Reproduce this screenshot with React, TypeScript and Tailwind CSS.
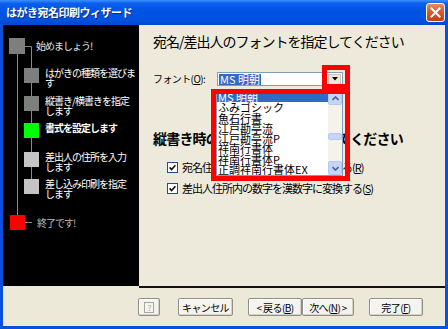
import React from 'react';

const fonts = [
  'MS 明朝',
  'ふみゴシック',
  '魚石行書',
  '江戸勘亭流',
  '江戸勘亭流P',
  '祥南行書体',
  '祥南行書体P',
  '正調祥南行書体EX',
];

function SubStep({ mt, color, bold, lines }: { mt: string; color: string; bold?: boolean; lines: string[] }) {
  return (
    <div className={`flex items-start ml-[21px] ${mt}`}>
      <span className={`w-[15px] h-[15px] shrink-0 ${color}`} />
      <span className={`ml-[6px] leading-[10px] whitespace-nowrap ${bold ? 'font-bold' : ''}`}>
        {lines.map((l) => (
          <span key={l} className="block">
            {l}
          </span>
        ))}
      </span>
    </div>
  );
}

function StepPanel() {
  return (
    <div className="relative w-[136px] h-full shrink-0 bg-black text-white text-[10px] tracking-[-1px]">
      <svg className="absolute inset-0" width="136" height="261">
        <g stroke="#8a8a8a" strokeWidth="1" fill="none">
          <path d="M14.5 29 V190" />
          <path d="M22 21.5 H28.5 V162" />
          <path d="M22 197.5 H29" />
        </g>
      </svg>
      <div className="relative flex flex-col pt-[13px]">
        <div className="flex items-center h-[16px] ml-[6px]">
          <span className="w-[16px] h-[16px] bg-[#7d7f7d]" />
          <span className="ml-[11px] leading-[16px] text-[#e4e4e4]">始めましょう!</span>
        </div>
        <SubStep mt="mt-[14px]" color="bg-[#7d7f7d]" lines={['はがきの種類を選びま', 'す']} />
        <SubStep mt="mt-[8px]" color="bg-[#7d7f7d]" lines={['縦書き/横書きを指定', 'します']} />
        <SubStep mt="mt-[7px]" color="bg-[#00ff00]" bold lines={['書式を設定します']} />
        <SubStep mt="mt-[14px]" color="bg-[#c4c4c4]" lines={['差出人の住所を入力', 'します']} />
        <SubStep mt="mt-[7px]" color="bg-[#c4c4c4]" lines={['差し込み印刷を指定', 'します']} />
        <div className="flex items-center ml-[7px] mt-[16px]">
          <span className="w-[15px] h-[15px] bg-[#ff0000]" />
          <span className="ml-[12px] leading-[15px] text-[#b8b8b8]">終了です!</span>
        </div>
      </div>
    </div>
  );
}

function Check({ label, k }: { label: string; k: string }) {
  return (
    <div className="flex items-center h-[11px] ml-[14px]">
      <span className="w-[11px] h-[11px] border border-[#1c5180] bg-white flex items-center justify-center">
        <svg width="7" height="7" viewBox="0 0 7 7">
          <path d="M0.6 3.4 L2.6 5.5 L6.4 1.2" stroke="#111" strokeWidth="1.6" fill="none" />
        </svg>
      </span>
      <span className="ml-[4px] text-[11px] leading-[11px] tracking-[-1px] whitespace-nowrap">
        {label}(<span className="underline">{k}</span>)
      </span>
    </div>
  );
}

function Btn({ w, children, ml }: { w: string; children: React.ReactNode; ml: string }) {
  return (
    <div
      className={`${w} ${ml} h-[18px] flex items-center justify-center rounded-[2px] border border-[#8f8f88] bg-[#f4f3ee] shadow-[inset_-1px_-1px_0_#d6d3c6,inset_1px_1px_0_#ffffff] text-[10px] tracking-[-0.6px] whitespace-nowrap`}
    >
      {children}
    </div>
  );
}

export default function App() {
  return (
    <div className="w-[448px] h-[329px] flex flex-col overflow-hidden font-['Noto_Sans_CJK_JP',sans-serif] text-black">
      <div className="h-[25px] shrink-0 flex items-center justify-between pl-[6px] pr-[3px] bg-[linear-gradient(180deg,#3c8ffb_0%,#0a5fee_14%,#0054e3_45%,#0052e2_80%,#0045cf_100%)]">
        <span className="text-white text-[11px] font-bold tracking-[-0.5px] leading-none [text-shadow:1px_1px_0_#0a2a7a]">
          はがき宛名印刷ウィザード
        </span>
        <div className="w-[19px] h-[19px] rounded-[3px] border border-white bg-[linear-gradient(180deg,#e98a68_0%,#d95a33_45%,#c43d16_100%)] flex items-center justify-center">
          <svg width="11" height="11" viewBox="0 0 11 11">
            <path d="M1.5 1.5 L9.5 9.5 M9.5 1.5 L1.5 9.5" stroke="#fff" strokeWidth="2" strokeLinecap="square" />
          </svg>
        </div>
      </div>

      <div className="flex-1 flex flex-col border-x-[3px] border-b-[3px] border-[#0a4fdd] bg-[#ece9d8]">
        <div className="flex h-[261px]">
          <StepPanel />
          <div className="relative flex-1 pl-[14px] pt-[9px] bg-[#edeadc]">
            <h1 className="text-[14px] leading-[14px] tracking-[-1px] whitespace-nowrap">
              宛名/差出人のフォントを指定してください
            </h1>

            <div className="flex items-center h-[14px] mt-[24px]">
              <span className="w-[64px] text-[10px] tracking-[-0.6px] leading-[14px]">
                フォント(<span className="underline">O</span>):
              </span>
              <div className="w-[126px] h-[14px] border border-[#7f9db9] bg-white flex items-center pl-[1px] pr-[1px]">
                <span className="bg-[#316ac5] text-white text-[11px] leading-[11px] px-[1px]">MS 明朝</span>
                <span className="flex-1" />
                <span className="w-[13px] h-[11px] bg-[#ece9d8] border border-[#c9c6b8] flex items-center justify-center">
                  <svg width="6" height="4" viewBox="0 0 6 4">
                    <path d="M0 0 H6 L3 3.5 Z" fill="#000" />
                  </svg>
                </span>
              </div>
            </div>

            <h2 className="mt-[45px] text-[14px] leading-[14px] font-bold tracking-[-0.8px] whitespace-nowrap">
              縦書き時の数字の表記を指定してください
            </h2>

            <div className="mt-[17px]">
              <Check label="宛名住所内の数字を漢数字に変換する" k="R" />
            </div>
            <div className="mt-[10px]">
              <Check label="差出人住所内の数字を漢数字に変換する" k="S" />
            </div>

            {/* open dropdown list */}
            <div className="absolute left-[77px] top-[65px] w-[127px] h-[86px] border border-[#7f9db9] bg-white flex">
              <div className="flex-1 pt-[1px] text-[11px] leading-[10.3px] whitespace-nowrap overflow-hidden">
                {fonts.map((f, i) => (
                  <div key={f} className={i === 0 ? 'bg-[#316ac5] text-white pl-[1px]' : 'pl-[1px]'}>
                    {f}
                  </div>
                ))}
              </div>
              <div className="w-[14px] flex flex-col bg-[#f4f2ea]">
                <div className="h-[14px] rounded-[2px] bg-[#c6d5fa] border border-[#b4c8f5] flex items-center justify-center">
                  <svg width="7" height="5" viewBox="0 0 7 5">
                    <path d="M0.5 4 L3.5 1 L6.5 4" stroke="#4d6185" strokeWidth="1.6" fill="none" />
                  </svg>
                </div>
                <div className="mt-[28px] h-[7px] rounded-[2px] bg-[#c6d5fa] border border-[#b4c8f5]" />
                <div className="flex-1" />
                <div className="h-[14px] rounded-[2px] bg-[#c6d5fa] border border-[#b4c8f5] flex items-center justify-center">
                  <svg width="7" height="5" viewBox="0 0 7 5">
                    <path d="M0.5 1 L3.5 4 L6.5 1" stroke="#4d6185" strokeWidth="1.6" fill="none" />
                  </svg>
                </div>
              </div>
            </div>

            {/* red annotation boxes */}
            <div className="absolute left-[183px] top-[40px] w-[28px] h-[24px] border-[5px] border-[#ff0000]" />
            <div className="absolute left-[72px] top-[64px] w-[139px] h-[92px] border-[5px] border-[#ff0000]" />
          </div>
        </div>

        <div className="ml-[136px] h-[2px] bg-[#111111]" />

        <div className="flex items-start pt-[10px] pl-[135px]">
          <Btn w="w-[22px]" ml="ml-0">
            <span className="w-[10px] h-[11px] border border-[#aca899] text-[#aca899] text-[8px] leading-[9px] flex justify-center">
              ?
            </span>
          </Btn>
          <Btn w="w-[55px]" ml="ml-[18px]">キャンセル</Btn>
          <Btn w="w-[54px]" ml="ml-[15px]">
            &lt; 戻る(<span className="underline">B</span>)
          </Btn>
          <Btn w="w-[52px]" ml="ml-0">
            次へ(<span className="underline">N</span>) &gt;
          </Btn>
          <Btn w="w-[54px]" ml="ml-[15px]">
            完了(<span className="underline">F</span>)
          </Btn>
        </div>
      </div>
    </div>
  );
}
